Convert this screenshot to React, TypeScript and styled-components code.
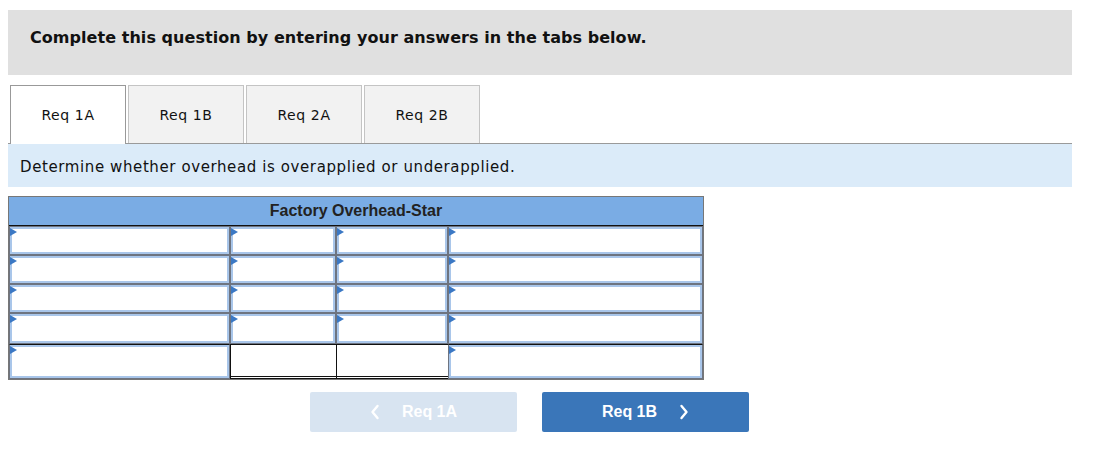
import React, { useState } from "react";
import styled, { createGlobalStyle, css } from "styled-components";

const GlobalStyle = createGlobalStyle`
  html, body {
    margin: 0;
    padding: 0;
    background: #ffffff;
  }
  body {
    font-family: "DejaVu Sans", Verdana, sans-serif;
    color: #111;
  }
`;

const tabs = ["Req 1A", "Req 1B", "Req 2A", "Req 2B"];

// T-account rows: which columns hold an input box
const rows: { height: number; blank: boolean[] }[] = [
  { height: 29, blank: [false, false, false, false] },
  { height: 29, blank: [false, false, false, false] },
  { height: 29, blank: [false, false, false, false] },
  { height: 31, blank: [false, false, false, false] },
  { height: 35, blank: [false, true, true, false] },
];

export default function App() {
  const [active, setActive] = useState<number>(0);

  return (
    <>
      <GlobalStyle />
      <Page>
        <Banner>Complete this question by entering your answers in the tabs below.</Banner>

        <TabStrip>
          {tabs.map((t, i) => (
            <Tab key={t} $active={i === active} onClick={() => setActive(i)}>
              {t}
            </Tab>
          ))}
        </TabStrip>

        <Instruction>Determine whether overhead is overapplied or underapplied.</Instruction>

        <Account>
          <AccountHeader>Factory Overhead-Star</AccountHeader>
          {rows.map((row, r) =>
            row.blank.map((blank, c) => (
              <Cell
                key={`${r}-${c}`}
                $blank={blank}
                $last={r === rows.length - 1}
                style={{ height: row.height }}
              >
                {!blank && <Entry />}
              </Cell>
            ))
          )}
        </Account>

        <Nav>
          <NavButton $disabled>
            <Chevron viewBox="0 0 10 16">
              <path d="M7.5 2 L2.5 8 L7.5 14" />
            </Chevron>
            Req 1A
          </NavButton>
          <NavButton>
            Req 1B
            <Chevron viewBox="0 0 10 16">
              <path d="M2.5 2 L7.5 8 L2.5 14" />
            </Chevron>
          </NavButton>
        </Nav>
      </Page>
    </>
  );
}

const Page = styled.div`
  width: 1064px;
  padding: 10px 0 0 8px;
`;

const Banner = styled.div`
  height: 65px;
  background: #e0e0e0;
  padding: 0 22px;
  display: flex;
  align-items: center;
  font-weight: bold;
  font-size: 16px;
  letter-spacing: 0.05px;
  color: #111;
  box-sizing: border-box;
  padding-bottom: 10px;
`;

const TabStrip = styled.div`
  margin-top: 10px;
  display: flex;
  gap: 2px;
  padding-left: 2px;
  border-bottom: 1px solid #9a9a9a;
  height: 58px;
`;

const Tab = styled.div<{ $active: boolean }>`
  width: 116px;
  box-sizing: border-box;
  display: flex;
  align-items: center;
  justify-content: center;
  font-size: 14px;
  letter-spacing: 0.6px;
  color: #111;
  cursor: pointer;
  border: 1px solid #c4c4c4;
  border-bottom: none;
  background: #f2f2f2;
  ${(p) =>
    p.$active &&
    css`
      background: #ffffff;
      border-color: #999;
      height: 59px;
      position: relative;
      z-index: 1;
    `}
`;

const Instruction = styled.div`
  height: 43px;
  box-sizing: border-box;
  background: #dbebf9;
  display: flex;
  align-items: center;
  padding: 3px 0 0 12px;
  font-size: 15px;
  letter-spacing: 0.6px;
  color: #111;
`;

const Account = styled.div`
  margin-top: 9px;
  width: 696px;
  box-sizing: border-box;
  border: 1px solid #777;
  display: grid;
  grid-template-columns: 221px 106px 112px 255px;
  font-family: "Liberation Sans", Arial, sans-serif;
`;

const AccountHeader = styled.div`
  grid-column: 1 / -1;
  height: 29px;
  box-sizing: border-box;
  background: #7aace4;
  border-bottom: 1px solid #111;
  display: flex;
  align-items: center;
  justify-content: center;
  font-weight: bold;
  font-size: 16px;
  color: #222;
  padding-bottom: 1px;
`;

const Cell = styled.div<{ $blank: boolean; $last: boolean }>`
  box-sizing: border-box;
  border: 1px solid #6e7480;
  background: #fff;
  ${(p) =>
    p.$last &&
    css`
      border-top-color: #111;
    `}
  ${(p) =>
    p.$blank &&
    css`
      border: none;
      border-left: 1px solid #111;
      border-top: 1px solid #111;
      border-bottom: 3px double #111;
    `}
`;

const Entry = styled.div`
  position: relative;
  height: 100%;
  box-sizing: border-box;
  border: 2px solid #a9c6ea;
  background: #fff;

  &::before {
    content: "";
    position: absolute;
    left: -2px;
    top: -1px;
    border-left: 7px solid #3b78c4;
    border-top: 4px solid transparent;
    border-bottom: 4px solid transparent;
  }
`;

const Nav = styled.div`
  display: flex;
  gap: 25px;
  margin-top: 12px;
  padding-left: 302px;
`;

const NavButton = styled.div<{ $disabled?: boolean }>`
  width: 207px;
  height: 40px;
  border-radius: 2px;
  display: flex;
  align-items: center;
  justify-content: center;
  gap: 22px;
  font-family: "Liberation Sans", Arial, sans-serif;
  font-weight: bold;
  font-size: 16px;
  color: #fff;
  background: ${(p) => (p.$disabled ? "#d8e4f1" : "#3a76b9")};
  cursor: ${(p) => (p.$disabled ? "default" : "pointer")};
`;

const Chevron = styled.svg`
  width: 10px;
  height: 16px;
  fill: none;
  stroke: #fff;
  stroke-width: 2.4;
  stroke-linecap: round;
  stroke-linejoin: round;
`;
